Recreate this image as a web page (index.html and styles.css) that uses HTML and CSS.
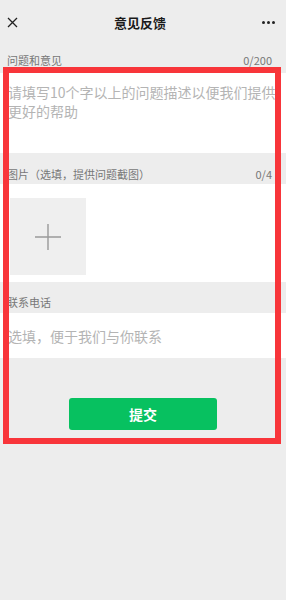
FILE: index.html
```html
<!DOCTYPE html>
<html lang="zh-CN">
<head>
    <meta charset="UTF-8">
    <meta name="viewport" content="width=device-width, initial-scale=1.0">
    <title>意见反馈</title>
    <link rel="stylesheet" href="styles.css">
</head>
<body>
    <div class="page">
        <div class="header">
            <svg class="close" width="11" height="11" viewBox="0 0 11 11">
                <path d="M1 1 L10 10 M10 1 L1 10" stroke="#222" stroke-width="1.3" fill="none"/>
            </svg>
            <h1>意见反馈</h1>
            <div class="more"><span></span><span></span><span></span></div>
        </div>

        <div class="label-row first">
            <span>问题和意见</span>
            <span>0/200</span>
        </div>
        <div class="text-box">
            <p class="holder">请填写10个字以上的问题描述以便我们提供更好的帮助</p>
        </div>

        <div class="label-row second">
            <span>图片（选填，提供问题截图）</span>
            <span>0/4</span>
        </div>
        <div class="pic-box">
            <div class="add-pic">
                <svg width="28" height="28" viewBox="0 0 28 28">
                    <path d="M14 1 V27 M1 14 H27" stroke="#9a9a9a" stroke-width="1.4" fill="none"/>
                </svg>
            </div>
        </div>

        <div class="label-row third">
            <span>联系电话</span>
        </div>
        <div class="phone-box">
            <p class="holder">选填，便于我们与你联系</p>
        </div>

        <div class="btn-wrap">
            <button type="button" class="submit">提交</button>
        </div>

        <!-- annotation frame -->
        <div class="mark"></div>
    </div>
</body>
</html>
```

FILE: styles.css
```css
*{
    margin: 0;
    padding: 0;
    box-sizing: border-box;
    font-family: "Noto Sans CJK SC", "Noto Sans", sans-serif;
}
body{
    background-color: #ededed;
}
.page{
    position: relative;
    width: 286px;
    min-height: 600px;
}
.header{
    height: 44px;
    display: flex;
    align-items: center;
    justify-content: space-between;
    padding: 0 11px 0 7px;
}
.header h1{
    font-size: 13px;
    font-weight: 700;
    color: #1a1a1a;
}
.more{
    display: flex;
    gap: 2px;
    width: 13px;
}
.more span{
    width: 3px;
    height: 3px;
    border-radius: 50%;
    background-color: #222;
}
.label-row{
    display: flex;
    justify-content: space-between;
    padding: 0 14px 0 7px;
    font-size: 11px;
    line-height: 16px;
    color: #777;
}
.label-row.first{
    padding-top: 8px;
    height: 29px;
}
.label-row.second{
    padding-top: 13px;
    height: 31px;
}
.label-row.third{
    padding-top: 12px;
    height: 31px;
}
.holder{
    font-size: 14px;
    color: #b4b4b4;
}
.text-box{
    background-color: #fff;
    height: 80px;
    padding: 10px 10px 0 8px;
}
.text-box .holder{
    line-height: 19px;
}
.pic-box{
    background-color: #fff;
    height: 98px;
    padding: 14px 0 0 10px;
}
.add-pic{
    width: 76px;
    height: 77px;
    background-color: #efefef;
    display: flex;
    align-items: center;
    justify-content: center;
}
.phone-box{
    background-color: #fff;
    height: 45px;
    padding: 13px 0 0 8px;
}
.phone-box .holder{
    line-height: 20px;
}
.btn-wrap{
    display: flex;
    justify-content: center;
    padding-top: 40px;
}
.submit{
    width: 148px;
    height: 32px;
    border: none;
    border-radius: 3px;
    background-color: #07c160;
    color: #fff;
    font-size: 14px;
    font-weight: 700;
}
.mark{
    position: absolute;
    left: 3px;
    top: 67px;
    width: 278px;
    height: 377px;
    border: 6px solid #f8353a;
}
```
